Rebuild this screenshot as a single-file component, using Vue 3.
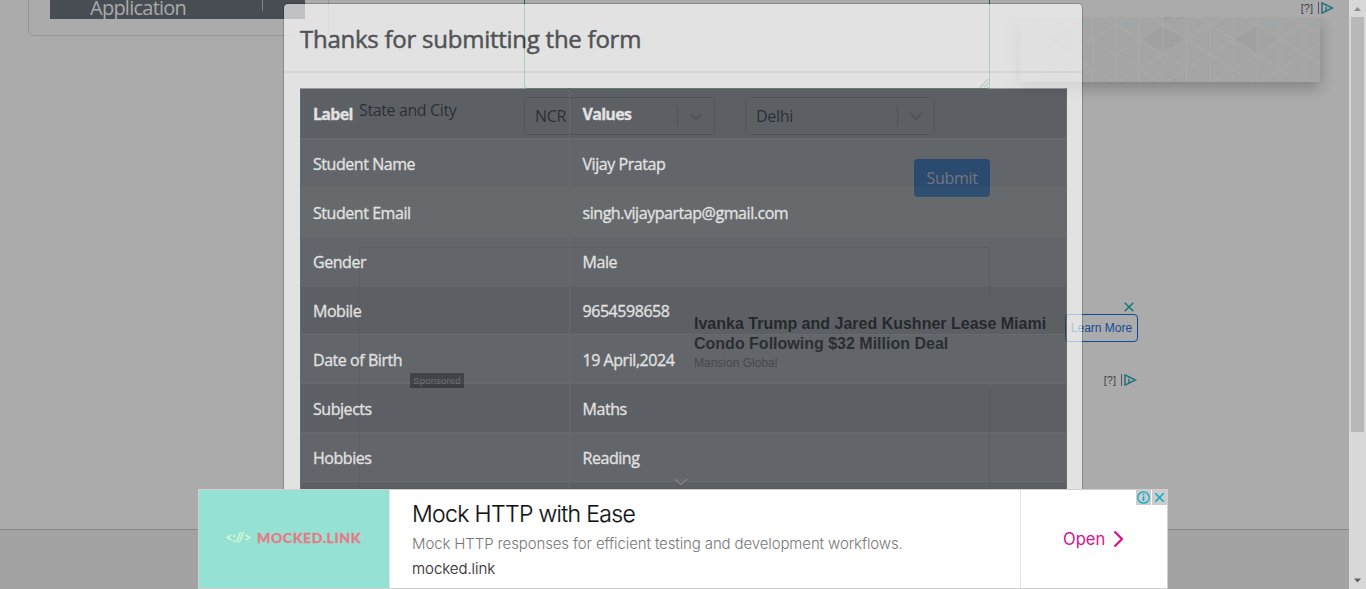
<script setup>
const rows = [
  ['Student Name', 'Vijay Pratap'],
  ['Student Email', 'singh.vijaypartap@gmail.com'],
  ['Gender', 'Male'],
  ['Mobile', '9654598658'],
  ['Date of Birth', '19 April,2024'],
  ['Subjects', 'Maths'],
  ['Hobbies', 'Reading'],
  ['Picture', ''],
]
const selects = ['NCR', 'Delhi']
const verticals = [2, 25.5, 49, 72.5, 96, 119.5, 143, 166.5, 190, 213, 237, 260, 284]
</script>

<template>
  <div class="screen">
    <div class="page">
      <aside class="sidebar">
        <div class="side-item"><span>Application</span><i></i></div>
      </aside>

      <main class="content">
        <div class="textarea">
          <svg width="10" height="10" viewBox="0 0 10 10"><path d="M1 9.5L9.5 1M5 9.5L9.5 5" /></svg>
        </div>
        <div class="form-row">
          <label>State and City</label>
          <div v-for="s in selects" :key="s" class="select">
            <span>{{ s }}</span>
            <i></i>
            <svg width="20" height="20" viewBox="0 0 20 20"><path d="M4.516 7.548c0.436-0.446 1.043-0.481 1.576 0l3.908 3.747 3.908-3.747c0.533-0.481 1.141-0.446 1.574 0 0.436 0.445 0.408 1.197 0 1.615-0.406 0.418-4.695 4.502-4.695 4.502-0.217 0.223-0.502 0.335-0.787 0.335s-0.57-0.112-0.789-0.335c0 0-4.287-4.084-4.695-4.502s-0.436-1.17 0-1.615z" /></svg>
          </div>
        </div>
        <div class="actions"><button class="submit">Submit</button></div>
        <div class="frame">
          <div class="native-ad">
            <div class="thumb"><span>Sponsored</span></div>
            <div class="copy">
              <h4>Ivanka Trump and Jared Kushner Lease Miami<br />Condo Following $32 Million Deal</h4>
              <p>Mansion Global</p>
            </div>
            <div class="ad-side">
              <svg class="x" width="10" height="10" viewBox="0 0 10 10"><path d="M.7 .7L9.3 9.3M9.3 .7L.7 9.3" /></svg>
              <span class="learn">Learn More</span>
              <div class="choices">
                <span>[?]</span><i></i>
                <svg width="13" height="12" viewBox="0 0 13 12"><path d="M1 .8L11.5 6L1 11.2Z" /><path d="M5 5v4M5 2.8v1.2" /></svg>
              </div>
            </div>
          </div>
        </div>
      </main>

      <aside class="display-ad">
        <div class="ad-bar">
          <div class="choices">
            <span>[?]</span><i></i>
            <svg width="13" height="12" viewBox="0 0 13 12"><path d="M1 .8L11.5 6L1 11.2Z" /><path d="M5 5v4M5 2.8v1.2" /></svg>
          </div>
        </div>
        <svg class="pattern" width="300" height="65" viewBox="0 0 300 65">
          <rect width="300" height="65" fill="#a5a5a5" />
          <path d="M119.500 22L143 8L166.500 22L143 37ZM213 22L237 8V37ZM143 8L166.500 0H143Z" fill="#a0a0a0" />
          <path d="M25 22L49 8V37ZM143 65V52L166.500 65ZM237 8L260 22L237 37Z" fill="#a3a3a3" />
          <g stroke="#aaa" stroke-width="1.100" fill="none">
            <path v-for="v in verticals" :key="v" :d="`M${v} 0V65`" />
            <path d="M2 8L25.500 22L49 8L72.500 22L96 8L119.500 22L143 8L166.500 22L190 8L213 22L237 8L260 22L284 8L300 17M2 37L25.500 22L49 37L72.500 22L96 37L119.500 22L143 37L166.500 22L190 37L213 22L237 37L260 22L284 37L300 27M2 37L25.500 52L49 37L72.500 52L96 37L119.500 52L143 37L166.500 52L190 37L213 52L237 37L260 52L284 37L300 47M5 65L25.500 52L46 65M52 65L72.500 52L93 65M99 65L119.500 52L140 65M146 65L166.500 52L187 65M193 65L213 52L234 65M240 65L260 52L281 65M2 8L15 0M49 8L36 0M49 8L62 0M96 8L83 0M96 8L109 0M143 8L130 0M143 8L156 0M190 8L177 0M190 8L203 0M237 8L224 0M237 8L250 0M284 8L271 0M284 8L297 0" />
          </g>
          <path d="M61 7h10M101 7h18M244 7h15M287 7h13" stroke="#93afb0" stroke-width="1.500" />
        </svg>
      </aside>
      <footer></footer>
    </div>

    <section class="modal">
      <header>Thanks for submitting the form</header>
      <div class="modal-body">
        <table>
          <thead><tr><th>Label</th><th>Values</th></tr></thead>
          <tbody>
            <tr v-for="r in rows" :key="r[0]" :class="{ hover: r[0] === 'Student Email' }"><td>{{ r[0] }}</td><td>{{ r[1] }}</td></tr>
          </tbody>
        </table>
      </div>
    </section>

    <div class="scrollbar">
      <svg class="up" width="17" height="17" viewBox="0 0 17 17"><path d="M5 11L8.500 7L12 11Z" /></svg>
      <div class="thumb-bar"></div>
      <svg class="down" width="17" height="17" viewBox="0 0 17 17"><path d="M5 6.500H12L8.500 10.500Z" /></svg>
    </div>

    <svg class="collapse" width="14" height="8" viewBox="0 0 14 8"><path d="M.8 1L7 6.500L13.200 1" /></svg>

    <section class="banner">
      <div class="logo"><span class="code">&lt;://&gt;</span><span class="brand">MOCKED.LINK</span></div>
      <div class="banner-copy">
        <h3>Mock HTTP with Ease</h3>
        <p>Mock HTTP responses for efficient testing and development workflows.</p>
        <small>mocked.link</small>
      </div>
      <div class="open">
        <span>Open</span>
        <svg width="11" height="18" viewBox="0 0 11 18"><path d="M1.500 1.500L9 9L1.500 16.500" /></svg>
      </div>
      <div class="corner">
        <svg width="15" height="15" viewBox="0 0 15 15"><circle cx="7.500" cy="7.500" r="5.700" /><path d="M7.500 6.500v4.500M7.500 3.800v1.500" stroke-width="1.600" /></svg>
        <svg width="15" height="15" viewBox="0 0 15 15"><path d="M3.300 3.300L11.700 11.700M11.700 3.300L3.300 11.700" stroke-width="1.500" /></svg>
      </div>
    </section>
  </div>
</template>

<style>
body { margin: 0; overflow: hidden; }
</style>

<style scoped>
* { box-sizing: border-box; }
.screen { position: relative; width: 1366px; height: 589px; overflow: hidden; background: #ababab; font-family: "Open Sans", "Noto Sans", sans-serif; font-size: 16px; color: #16191b; }
.page { display: grid; grid-template-columns: 359px 661px 1fr; grid-template-rows: 529px 60px; width: 1366px; height: 589px; }
.sidebar { width: 301px; height: 36px; margin-left: 28px; padding: 0 0 0 21px; border: 1px solid #979797; border-top: 0; border-radius: 0 0 5px 5px; }
.side-item { display: flex; width: 255px; height: 19px; background: #484d54; color: #aaa; font-size: 20px; padding-left: 40px; line-height: 15px; letter-spacing: -.75px; }
.side-item span { width: 172px; }
.side-item i { width: 1px; height: 11px; background: #858585; }
.content { width: 631px; }
.textarea { display: flex; align-items: flex-end; justify-content: flex-end; width: 466px; height: 89px; margin-left: 165px; border: 1px solid #1b702e; border-top: 0; border-radius: 0 0 4px 4px; }
.textarea svg { stroke: #222; stroke-width: 1; }
.form-row { display: flex; margin-top: 8px; height: 38px; }
label { width: 165px; line-height: 26px; letter-spacing: -.38px; white-space: nowrap; }
.select { display: flex; align-items: center; width: 191px; height: 38px; margin-right: 30px; border: 1px solid #878787; border-radius: 4px; padding-left: 10px; flex: none; }
.select + .select { width: 190px; }
.select + .select span { width: 141px; }
.select span { width: 142px; letter-spacing: -.3px; }
.select i { width: 1px; height: 21px; background: #878787; margin-right: 8px; }
.select svg { fill: #868686; }
.actions { display: flex; justify-content: flex-end; margin-top: 24px; }
.submit { width: 76px; height: 38px; padding: 0; border: 0; border-radius: 4px; background: #0d5cbc; color: #d8dadc; font: 16px "Open Sans", sans-serif; letter-spacing: -.3px; }
.frame { width: 631px; height: 242px; margin-top: 50px; border: 1px solid #979797; padding-top: 50px; }
.native-ad { display: flex; width: 790px; height: 90px; background: #ababab; margin-left: 1px; }
.thumb { width: 333px; padding: 75px 0 0 49px; }
.thumb span { display: block; width: 54px; height: 15px; background: #484848; color: #c8c8c8; font: 9.500px/15px "Liberation Sans", Arial, sans-serif; letter-spacing: .15px; text-align: center; }
.copy { width: 371px; font-family: "Liberation Sans", Arial, sans-serif; padding-top: 16px; }
h4 { margin: 0; font-size: 16px; line-height: 20px; white-space: nowrap; color: #060606; }
.copy p { margin: 1px 0 0; font-size: 12px; line-height: 16px; color: #555; }
.ad-side { width: 74px; padding-top: 4px; display: flex; flex-direction: column; }
.x { align-self: flex-end; margin-right: 5px; stroke: #127780; stroke-width: 1.5; }
.learn { width: 73px; height: 28px; margin-top: 2px; border: 1px solid #164a94; border-radius: 4px; color: #164a94; font: 12px/26px "Liberation Sans", Arial, sans-serif; text-align: center; white-space: nowrap; }
.choices { display: flex; align-items: center; justify-content: flex-end; height: 12px; font: 11px/12px "Liberation Sans", Arial, sans-serif; color: #444; }
.choices i { width: 1px; height: 12px; background: #555; margin: 0 2px 0 5px; }
.choices svg { stroke: #1d707c; fill: none; stroke-width: 1.4; }
.ad-side .choices { margin-top: 32px; margin-right: 2px; flex: none; }
.display-ad { width: 300px; }
.ad-bar { height: 17px; width: 314px; padding-top: 2px; }
.pattern { display: block; box-shadow: 0 6px 14px rgba(0, 0, 0, .24); clip-path: inset(0 -30px -30px -30px); }
footer { grid-column: 1 / -1; border-top: 1px solid #868686; background: #a3a3a3; }
.modal { position: absolute; left: 283px; top: 3px; width: 800px; height: 530px; opacity: .655; background: #fff; background-clip: padding-box; border: 1px solid rgba(0, 0, 0, .3); border-radius: 5px; color: #212529; overflow: hidden; }
.modal header { height: 69px; padding: 16px; border-bottom: 2px solid #eee; font-size: 24px; line-height: 38px; letter-spacing: -.25px; -webkit-text-stroke: .5px #212529; }
.modal-body { padding: 15px 16px; }
table { width: 766px; table-layout: fixed; border-collapse: collapse; background: #343a40; color: #fff; }
th, td { width: 269px; height: 49px; padding: 2px 12px 0; border: 1px solid #434a51; text-align: left; letter-spacing: -.45px; font-weight: 400; -webkit-text-stroke: .3px #fff; }
th { height: 50px; font-weight: 700; border-bottom-width: 2px; border-top-color: #858b90; letter-spacing: -.7px; }
th + th, td + td { width: 497px; padding-left: 12.5px; }
tbody tr:nth-child(odd) { background: rgba(255, 255, 255, .045); }
tbody tr.hover { background: #42494b; }
.scrollbar { position: absolute; right: 0; top: 0; width: 17px; height: 589px; background: #d8d8d8; display: flex; flex-direction: column; align-items: center; }
.thumb-bar { width: 13px; height: 415px; background: #b8b8b8; }
.scrollbar svg { fill: #8c8c8c; flex: none; }
.scrollbar .down { margin-top: auto; fill: #606060; }
.collapse { position: absolute; left: 674px; top: 478px; fill: none; stroke: #85888b; stroke-width: 1.1; }
.banner { position: absolute; left: 198px; top: 489px; width: 970px; height: 100px; display: flex; background: #fff; border: 1px solid #cfd1d1; font-family: Inter, sans-serif; }
.logo { width: 191px; background: #95e2d4; border-right: 1px solid #d9eeea; display: flex; align-items: center; padding: 0 0 4px 26px; font-family: Lato, sans-serif; }
.code { width: 32px; color: #d8f8cd; font-size: 13px; font-weight: 900; letter-spacing: -.3px; }
.brand { color: #e37d88; font-size: 14px; font-weight: 900; letter-spacing: .6px; -webkit-text-stroke: .3px #e37d88; }
.banner-copy { width: 630px; padding: 8px 0 0 22px; white-space: nowrap; }
h3 { margin: 0; font-size: 23px; line-height: 32px; font-weight: 300; color: #111; letter-spacing: -.65px; -webkit-text-stroke: .2px #222; }
.banner-copy p { margin: 2px 0 0; font-size: 15px; line-height: 24px; color: #777; font-weight: 300; letter-spacing: -.12px; }
small { display: block; font-size: 15px; line-height: 25px; color: #333; font-weight: 300; letter-spacing: -.05px; -webkit-text-stroke: .15px #333; }
.open { flex: 1; display: flex; align-items: center; padding-left: 42px; gap: 9px; border-left: 1px solid #e3e3e3; color: #d9118b; font-size: 16.600px; }
.open svg { fill: none; stroke: #d9118b; stroke-width: 2.2; margin-left: -1px; }
.corner { position: absolute; right: 0; top: 0; display: flex; gap: 1px; }
.corner svg { background: #ccc; fill: none; stroke: #08abc9; stroke-width: 1.2; }
</style>
